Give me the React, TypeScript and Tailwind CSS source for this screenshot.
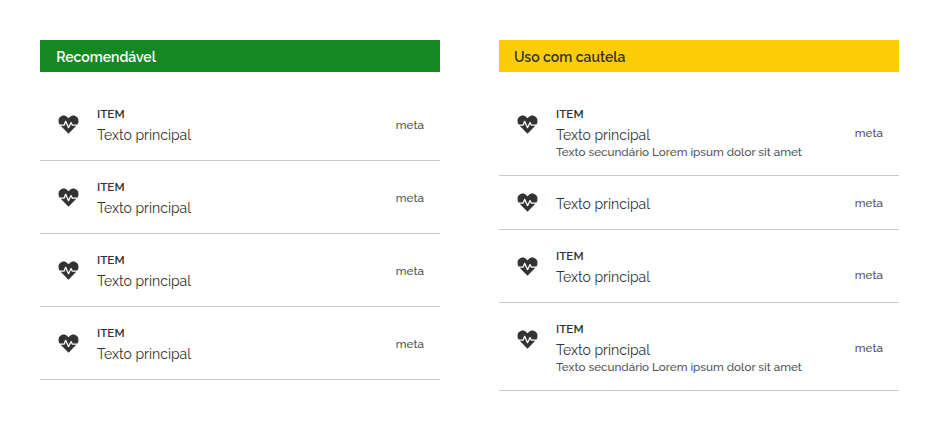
import { FaHeartbeat } from "react-icons/fa";

type Item = {
  label?: string;
  secondary?: string;
  height: string;
  metaOffset: string;
};

const recommended: Item[] = [0, 1, 2, 3].map(() => ({
  label: "ITEM",
  height: "h-[73px]",
  metaOffset: "pt-[29px]",
}));

const caution: Item[] = [
  { label: "ITEM", secondary: "Texto secundário Lorem ipsum dolor sit amet", height: "h-[88px]", metaOffset: "pt-[37px]" },
  { height: "h-[54px]", metaOffset: "pt-[19px]" },
  { label: "ITEM", height: "h-[73px]", metaOffset: "pt-[37px]" },
  { label: "ITEM", secondary: "Texto secundário Lorem ipsum dolor sit amet", height: "h-[88px]", metaOffset: "pt-[37px]" },
];

function Row({ item }: { item: Item }) {
  return (
    <li className={`flex items-start border-b border-[#c8c8c8] pr-4 pl-[18px] ${item.height}`}>
      <FaHeartbeat className={`size-[21px] shrink-0 scale-[0.97] text-[#333] ${item.label ? "mt-[26px]" : "mt-4"}`} />
      <div className={`ml-[18px] flex-1 whitespace-nowrap text-[#333] ${item.label ? "pt-4" : "pt-[17px]"}`}>
        {item.label && <p className="text-[11.66px] leading-5 font-semibold">{item.label}</p>}
        <p className="text-[14px] leading-[22px]">Texto principal</p>
        {item.secondary && (
          <p className="-mt-[2px] text-[11.66px] leading-4 font-medium text-[#555]">{item.secondary}</p>
        )}
      </div>
      <span className={`text-[11.66px] leading-4 font-medium text-[#555] ${item.metaOffset}`}>meta</span>
    </li>
  );
}

function Panel({ title, header, items }: { title: string; header: string; items: Item[] }) {
  return (
    <section className="w-[400px]">
      <h2 className={`h-8 text-[14px] leading-[34px] font-semibold ${header}`}>{title}</h2>
      <ul className="mt-4">
        {items.map((item, i) => (
          <Row key={i} item={item} />
        ))}
      </ul>
    </section>
  );
}

export default function App() {
  return (
    <main className="flex h-[431px] w-[939px] gap-[59px] bg-white pt-10 pl-10 font-[Raleway,Lato,sans-serif]">
      <Panel title="Recomendável" header="bg-[#168821] pl-[16.25px] text-white" items={recommended} />
      <Panel title="Uso com cautela" header="bg-[#ffcd07] pl-[15px] text-[#333]" items={caution} />
    </main>
  );
}
